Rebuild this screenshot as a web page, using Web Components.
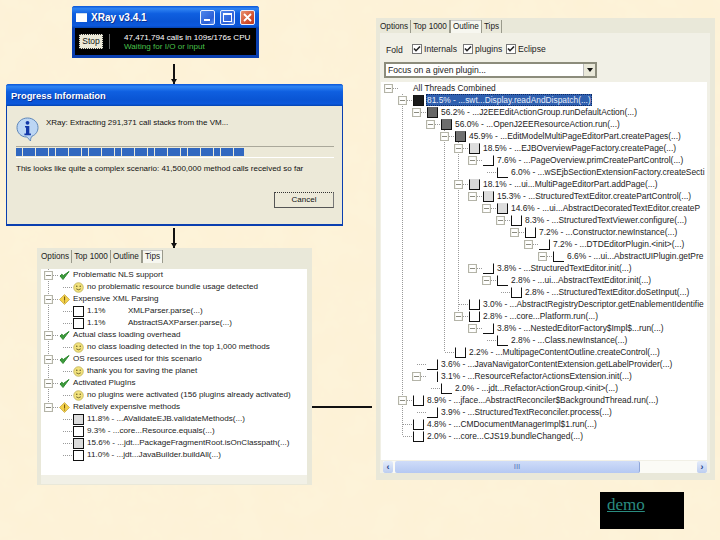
<!DOCTYPE html>
<html>
<head>
<meta charset="utf-8">
<title>XRay</title>
<style>
  html, body { margin: 0; padding: 0; background: #fdf2d6; }
</style>
</head>
<body>
<slide-canvas>
  <flow-arrow style="left:173px;top:64px;height:20px"></flow-arrow>
  <flow-arrow style="left:173px;top:228px;height:20px"></flow-arrow>
  <flow-arrow horizontal style="left:312px;top:406px;width:60px"></flow-arrow>

  <xray-window style="left:72px;top:6px"></xray-window>
  <progress-dialog style="left:6px;top:84px"></progress-dialog>

  <eclipse-panel tabs="Options,Top 1000,Outline,Tips" active="Tips" style="left:37px;top:248px;width:275px;height:237px;--row-font:8.1px">
    <tree-view style="height:206px;margin-top:6px">
      <tree-row level="1" g="0" kind="check" exp>Problematic NLS support</tree-row>
      <tree-row level="2" g="0" kind="smile">no problematic resource bundle usage detected</tree-row>
      <tree-row level="1" g="0" kind="warn" exp>Expensive XML Parsing</tree-row>
      <tree-row level="2" g="0" kind="box">1.1%&nbsp;&nbsp;&nbsp;&nbsp;&nbsp;&nbsp;&nbsp;&nbsp;&nbsp;&nbsp;XMLParser.parse(...)</tree-row>
      <tree-row level="2" g="0" kind="box">1.1%&nbsp;&nbsp;&nbsp;&nbsp;&nbsp;&nbsp;&nbsp;&nbsp;&nbsp;&nbsp;AbstractSAXParser.parse(...)</tree-row>
      <tree-row level="1" g="0" kind="check" exp>Actual class loading overhead</tree-row>
      <tree-row level="2" g="0" kind="smile">no class loading detected in the top 1,000 methods</tree-row>
      <tree-row level="1" g="0" kind="check" exp>OS resources used for this scenario</tree-row>
      <tree-row level="2" g="0" kind="smile">thank you for saving the planet</tree-row>
      <tree-row level="1" g="0" kind="check" exp>Activated PlugIns</tree-row>
      <tree-row level="2" g="0" kind="smile">no plugins were activated (156 plugins already activated)</tree-row>
      <tree-row level="1" g="0" tail kind="warn" exp>Relatively expensive methods</tree-row>
      <tree-row level="2" kind="box" fill="#dcdcdc">11.8% - ...AValidateEJB.validateMethods(...)</tree-row>
      <tree-row level="2" kind="box">9.3% - ...core...Resource.equals(...)</tree-row>
      <tree-row level="2" kind="box" fill="#dcdcdc">15.6% - ...jdt...PackageFragmentRoot.isOnClasspath(...)</tree-row>
      <tree-row level="2" kind="box">11.0% - ...jdt...JavaBuilder.buildAll(...)</tree-row>
    </tree-view>
  </eclipse-panel>

  <eclipse-panel tabs="Options,Top 1000,Outline,Tips" active="Outline" style="left:376px;top:18px;width:339px;height:462px;--row-font:8.4px">
    <fold-bar></fold-bar>
    <focus-combo>Focus on a given plugin...</focus-combo>
    <tree-view style="height:378px;margin-left:1px;margin-right:3px;padding-left:14px">
      <tree-row level="0" exp kind="none">All Threads Combined</tree-row>
      <tree-row level="1" g="0" exp fill="#1b1b1b" selected>81.5% - ...swt...Display.readAndDispatch(...)</tree-row>
      <tree-row level="2" g="0" exp fill="#666">56.2% - ...J2EEEditActionGroup.runDefaultAction(...)</tree-row>
      <tree-row level="3" g="0" exp fill="#6c6c6c">56.0% - ...OpenJ2EEResourceAction.run(...)</tree-row>
      <tree-row level="4" g="0 3" exp fill="#707070">45.9% - ...EditModelMultiPageEditorPart.createPages(...)</tree-row>
      <tree-row level="5" g="0 3 4" exp fill="#ddd">18.5% - ...EJBOverviewPageFactory.createPage(...)</tree-row>
      <tree-row level="6" g="0 3 4" exp edges="rb">7.6% - ...PageOverview.primCreatePartControl(...)</tree-row>
      <tree-row level="7" g="0 3 4" edges="lb">6.0% - ...wSEjbSectionExtensionFactory.createSecti</tree-row>
      <tree-row level="5" g="0 3 4" exp fill="#d8d8d8">18.1% - ...ui...MultiPageEditorPart.addPage(...)</tree-row>
      <tree-row level="6" g="0 3 4" exp fill="#ddd">15.3% - ...StructuredTextEditor.createPartControl(...)</tree-row>
      <tree-row level="7" g="0 3 4" exp fill="#ddd">14.6% - ...ui...AbstractDecoratedTextEditor.createP</tree-row>
      <tree-row level="8" g="0 3 4" exp>8.3% - ...StructuredTextViewer.configure(...)</tree-row>
      <tree-row level="9" g="0 3 4" exp>7.2% - ...Constructor.newInstance(...)</tree-row>
      <tree-row level="10" g="0 3 4" exp edges="rb">7.2% - ...DTDEditorPlugin.&lt;init&gt;(...)</tree-row>
      <tree-row level="11" g="0 3 4" exp edges="lb">6.6% - ...ui...AbstractUIPlugin.getPre</tree-row>
      <tree-row level="6" g="0 3 4" exp edges="rb">3.8% - ...StructuredTextEditor.init(...)</tree-row>
      <tree-row level="7" g="0 3 4" exp edges="lb">2.8% - ...ui...AbstractTextEditor.init(...)</tree-row>
      <tree-row level="8" g="0 3 4">2.8% - ...StructuredTextEditor.doSetInput(...)</tree-row>
      <tree-row level="5" g="0 3 4">3.0% - ...AbstractRegistryDescriptor.getEnablementIdentifie</tree-row>
      <tree-row level="5" g="0 3 4" tail exp>2.8% - ...core...Platform.run(...)</tree-row>
      <tree-row level="6" g="0 3" exp edges="rb">3.8% - ...NestedEditorFactory$Impl$...run(...)</tree-row>
      <tree-row level="7" g="0 3" edges="lb">2.8% - ...Class.newInstance(...)</tree-row>
      <tree-row level="4" g="0 3" tail>2.2% - ...MultipageContentOutline.createControl(...)</tree-row>
      <tree-row level="2" g="0" edges="rb">3.6% - ...JavaNavigatorContentExtension.getLabelProvider(...)</tree-row>
      <tree-row level="2" g="0" exp edges="r">3.1% - ...ResourceRefactorActionsExtension.init(...)</tree-row>
      <tree-row level="3" g="0" edges="lb">2.0% - ...jdt...RefactorActionGroup.&lt;init&gt;(...)</tree-row>
      <tree-row level="1" g="0" exp>8.9% - ...jface...AbstractReconciler$BackgroundThread.run(...)</tree-row>
      <tree-row level="2" g="0" edges="rb">3.9% - ...StructuredTextReconciler.process(...)</tree-row>
      <tree-row level="1" g="0">4.8% - ...CMDocumentManagerImpl$1.run(...)</tree-row>
      <tree-row level="1" g="0" tail>2.0% - ...core...CJS19.bundleChanged(...)</tree-row>
    </tree-view>
    <h-scrollbar></h-scrollbar>
  </eclipse-panel>

  <demo-link style="left:600px;top:492px">demo</demo-link>
</slide-canvas>

<script>
const UI_FONT = '"Liberation Sans", Arial, sans-serif';

class SlideCanvas extends HTMLElement {
    constructor() {
        super();
        this.attachShadow({ mode: 'open' });
    }

    connectedCallback() {
        this.shadowRoot.innerHTML = `
        <style>
            :host { display: block; position: relative; width: 720px; height: 540px; overflow: hidden; background: #fdf2d6; }
            svg { position: absolute; left: 0; top: 0; }
        </style>
        <svg width="720" height="540">
            <filter id="paper" x="0" y="0" width="100%" height="100%">
                <feTurbulence type="fractalNoise" baseFrequency="0.035" numOctaves="4" seed="7"/>
                <feColorMatrix values="0 0 0 0 0.98  0 0 0 0 0.90  0 0 0 0 0.72  0.9 0 0 0 -0.18"/>
            </filter>
            <rect width="720" height="540" filter="url(#paper)"/>
        </svg>
        <slot></slot>
        `;
    }
}

class FlowArrow extends HTMLElement {
    constructor() {
        super();
        this.attachShadow({ mode: 'open' });
    }

    connectedCallback() {
        this.shadowRoot.innerHTML = `
        <style>
            :host { display: block; position: absolute; width: 2px; background: #111; }
            :host([horizontal]) { height: 2px; }
            :host(:not([horizontal]))::after {
                content: '';
                position: absolute;
                left: -2px;
                bottom: 0;
                border-left: 3px solid transparent;
                border-right: 3px solid transparent;
                border-top: 5px solid #111;
            }
        </style>
        `;
    }
}

class XpTitlebar extends HTMLElement {
    constructor() {
        super();
        this.attachShadow({ mode: 'open' });
    }

    connectedCallback() {
        this.shadowRoot.innerHTML = `
        <style>
            :host {
                display: flex;
                align-items: center;
                box-sizing: border-box;
                height: 22px;
                padding: 0 4px;
                gap: 4px;
                color: #fff;
                font: bold 10px ${UI_FONT};
                border-radius: 3px 3px 0 0;
                background: linear-gradient(#0a56d8, #2f84f2 12%, #0f5fe0 35%, #0a55d4 70%, #0c58dc 90%, #0544b0);
                text-shadow: 1px 1px 0 #0a2f90;
            }
        </style>
        <slot></slot>
        `;
    }
}

class XrayWindow extends HTMLElement {
    constructor() {
        super();
        this.attachShadow({ mode: 'open' });
    }

    connectedCallback() {
        this.shadowRoot.innerHTML = `
        <style>
            :host { display: block; position: absolute; width: 187px; height: 52px; background: #0a3fb0; font-family: ${UI_FONT}; border-radius: 3px 3px 0 0; }
            .icon { width: 11px; height: 8px; background: #fff; border-top: 1px solid #cde; margin-right: 0; }
            .name { flex: 1; font-size: 10px; }
            .ctl {
                width: 15px;
                height: 15px;
                box-sizing: border-box;
                border: 1px solid #e8f0ff;
                border-radius: 2px;
                background: linear-gradient(135deg, #4f86ea, #2a5fd8 70%, #6c9af0);
                margin-left: 1px;
                display: flex;
                align-items: center;
                justify-content: center;
            }
            .ctl.min::before { content: ''; width: 6px; height: 2px; background: #fff; margin-top: 6px; margin-right: 2px; }
            .ctl.max::before { content: ''; width: 7px; height: 6px; border: 1px solid #fff; border-top-width: 2px; }
            .ctl.close { background: linear-gradient(135deg, #e89070, #d04a28 70%, #c03a20); }
            .ctl.close svg { display: block; }
            .body {
                margin: 0 3px;
                height: 27px;
                background: #000;
                display: flex;
                align-items: center;
                padding-left: 4px;
                box-sizing: border-box;
            }
            .stop {
                width: 24px;
                height: 15px;
                box-sizing: border-box;
                background: #ece9d8;
                border: 1px dotted #333;
                color: #111;
                font-size: 8.5px;
                line-height: 13px;
                text-align: center;
            }
            .sep { width: 1px; height: 15px; background: #666; margin: 0 14px 0 6px; }
            .lines { font-size: 8.1px; line-height: 9px; white-space: nowrap; }
            .cpu { color: #fff; }
            .wait { color: #49c24a; }
        </style>
        <xp-titlebar>
            <span class="icon"></span>
            <span class="name">XRay v3.4.1</span>
            <span class="ctl min"></span>
            <span class="ctl max"></span>
            <span class="ctl close"><svg width="9" height="9" viewBox="0 0 9 9"><path d="M1 1l7 7M8 1l-7 7" stroke="#fff" stroke-width="1.8"/></svg></span>
        </xp-titlebar>
        <div class="body">
            <div class="stop">Stop</div>
            <div class="sep"></div>
            <div class="lines">
                <div class="cpu">47,471,794 calls in 109s/176s CPU</div>
                <div class="wait">Waiting for I/O or input</div>
            </div>
        </div>
        `;
    }
}

class ProgressDialog extends HTMLElement {
    constructor() {
        super();
        this.attachShadow({ mode: 'open' });
    }

    connectedCallback() {
        this.shadowRoot.innerHTML = `
        <style>
            :host { display: block; position: absolute; width: 337px; height: 142px; background: #0a3fb0; font: 8px ${UI_FONT}; color: #111; border-radius: 3px 3px 0 0; }
            xp-titlebar { padding-left: 5px; font-size: 9.4px; }
            .body { margin: 0 1px; height: 118px; box-sizing: border-box; background: #ece9d8; padding: 11px 8px 0 9px; }
            .info { display: flex; gap: 7px; height: 29px; }
            .info svg { display: block; flex: none; }
            .info span { margin-top: 1px; }
            .bar {
                height: 9px;
                border-top: 1px solid #aaa89a;
                border-bottom: 1px solid #fff;
                padding: 1px 0 0;
                box-sizing: content-box;
            }
            .fill {
                width: 228px;
                height: 8px;
                background: repeating-linear-gradient(to right, #3168c0 0 6px, #ece9d8 6px 6.6px);
            }
            .msg { margin-top: 6px; white-space: nowrap; }
            .foot { display: flex; justify-content: flex-end; margin-top: 19px; }
            .cancel {
                width: 60px;
                height: 16px;
                box-sizing: border-box;
                border: 1px solid #555;
                border-top: 1px dotted #333;
                border-right-color: #777;
                background: #ece9d8;
                text-align: center;
                line-height: 14px;
            }
        </style>
        <xp-titlebar>Progress Information</xp-titlebar>
        <div class="body">
            <div class="info">
                <svg width="23" height="25" viewBox="0 0 23 25">
                    <path d="M11.5 1C5.5 1 1 5.3 1 10.5S5 20 10.5 20c1 0 2 2 4 4 0-2 .5-3.8 1.5-4.8 4-1.6 6-5 6-8.7C22 5.3 17.5 1 11.5 1z" fill="#bcd6f4" stroke="#5d86b8"/>
                    <circle cx="11.5" cy="5.8" r="1.9" fill="#1338a8"/>
                    <path d="M9 9h4.3v7.6h1.6v1.6H8.4v-1.6H10v-6H9z" fill="#1338a8"/>
                </svg>
                <span>XRay: Extracting 291,371 call stacks from the VM...</span>
            </div>
            <div class="bar"><div class="fill"></div></div>
            <div class="msg">This looks like quite a complex scenario: 41,500,000 method calls received so far</div>
            <div class="foot"><div class="cancel">Cancel</div></div>
        </div>
        `;
    }
}

class EclipsePanel extends HTMLElement {
    constructor() {
        super();
        this.attachShadow({ mode: 'open' });
    }

    connectedCallback() {
        const active = this.getAttribute('active');
        const tabs = this.getAttribute('tabs').split(',').map(name =>
            `<span class="tab ${name === active ? 'on' : ''}">${name}</span>`).join('');
        this.shadowRoot.innerHTML = `
        <style>
            :host { display: block; position: absolute; box-sizing: border-box; background: #e9e8d9; padding: 2px 5px 0 4px; font: 8.2px ${UI_FONT}; color: #222; }
            .tabs { display: flex; height: 13px; }
            .tab { padding: 0 2px; line-height: 13px; border-right: 1px solid #9a9a8c; white-space: nowrap; }
            .tab:first-child { padding-left: 0; }
            .tab.on { background: #f7f7f0; border-left: 1px solid #9a9a8c; box-shadow: inset 0 1px 0 #ccc; }
            .page { background: #f1f0e6; box-sizing: border-box; height: calc(100% - 20px); }
        </style>
        <div class="tabs">${tabs}</div>
        <div class="page"><slot></slot></div>
        `;
    }
}

class FoldBar extends HTMLElement {
    constructor() {
        super();
        this.attachShadow({ mode: 'open' });
    }

    connectedCallback() {
        const box = label => `
            <span class="opt"><svg width="10" height="10" viewBox="0 0 10 10"><rect x=".5" y=".5" width="9" height="9" fill="#fff" stroke="#777"/><path d="M2 4.5l2 2.2L8 2.5" fill="none" stroke="#222" stroke-width="1.6"/></svg>${label}</span>`;
        this.shadowRoot.innerHTML = `
        <style>
            :host { display: flex; align-items: center; height: 29px; padding: 2px 0 0 6px; font: 8.6px ${UI_FONT}; color: #222; box-sizing: border-box; }
            .fold { width: 26px; margin-top: 2px; }
            .opt { display: flex; align-items: center; gap: 2px; }
            .opt:nth-of-type(2) { width: 51px; }
            .opt:nth-of-type(3) { width: 43px; }
            svg { display: block; }
        </style>
        <span class="fold">Fold</span>
        ${box('Internals')}${box('plugins')}${box('Eclipse')}
        `;
    }
}

class FocusCombo extends HTMLElement {
    constructor() {
        super();
        this.attachShadow({ mode: 'open' });
    }

    connectedCallback() {
        this.shadowRoot.innerHTML = `
        <style>
            :host {
                display: flex;
                align-items: center;
                box-sizing: border-box;
                width: 213px;
                height: 16px;
                margin: 0 0 4px 4px;
                padding-left: 2px;
                background: #fff;
                border: 2px solid #8c8c7c;
                font: 8.6px ${UI_FONT};
                color: #222;
            }
            .text { flex: 1; }
            .btn { width: 11px; height: 12px; background: #e9e8d9; border-left: 1px solid #bbb; display: flex; align-items: center; justify-content: center; }
            .btn::before { content: ''; border-left: 3px solid transparent; border-right: 3px solid transparent; border-top: 4px solid #111; }
        </style>
        <span class="text"><slot></slot></span>
        <span class="btn"></span>
        `;
    }
}

class TreeView extends HTMLElement {
    constructor() {
        super();
        this.attachShadow({ mode: 'open' });
    }

    connectedCallback() {
        this.shadowRoot.innerHTML = `
        <style>
            :host { display: block; background: #fff; overflow: hidden; box-sizing: border-box; }
        </style>
        <slot></slot>
        `;
    }
}

const TREE_ICONS = {
    check: `<svg width="11" height="11" viewBox="0 0 11 11"><path d="M1 6l3 3.5L10 1.5 4.3 5.6 2.8 4.2z" fill="#3d9a3c" stroke="#2f8a30" stroke-width="1"/></svg>`,
    warn: `<svg width="11" height="11" viewBox="0 0 11 11"><path d="M5.5.5l5 5-5 5-5-5z" fill="#f4d24a" stroke="#b8962a" stroke-width=".6"/><path d="M5 2.5h1.1v4H5zM5 7.4h1.1v1.2H5z" fill="#7a5a10"/></svg>`,
    smile: `<svg width="11" height="11" viewBox="0 0 11 11"><circle cx="5.5" cy="5.5" r="4.8" fill="#f2e27c" stroke="#b8aa50" stroke-width=".7"/><circle cx="3.8" cy="4.2" r=".7" fill="#5a5020"/><circle cx="7.2" cy="4.2" r=".7" fill="#5a5020"/><path d="M3.2 6.8q2.3 2 4.6 0" fill="none" stroke="#5a5020" stroke-width=".8"/></svg>`
};

class TreeRow extends HTMLElement {
    constructor() {
        super();
        this.attachShadow({ mode: 'open' });
    }

    connectedCallback() {
        const level = Number(this.getAttribute('level'));
        const guides = (this.getAttribute('g') || '').split(' ').filter(Boolean).map(Number);
        const cells = [];
        for (let i = 0; i < level - 1; i++) {
            cells.push(`<span class="cell ${guides.includes(i) ? 'guide' : ''}"></span>`);
        }
        const ownGuide = guides.includes(level - 1);
        const kind = this.getAttribute('kind') || 'square';
        let icon = '';
        if (kind === 'none') {
            icon = '<span class="icon"></span>';
        } else if (TREE_ICONS[kind]) {
            icon = `<span class="icon">${TREE_ICONS[kind]}</span>`;
        } else {
            const edges = kind === 'box' ? 'tlrb' : (this.getAttribute('edges') || 'lrb');
            const side = (c, name) => edges.includes(c) ? `border-${name}:1px solid #111;` : '';
            const fill = this.getAttribute('fill') || '#fff';
            const top = edges.includes('t') ? 'border-top:1px solid #111;' : `border-top:1px solid ${fill};`;
            icon = `<span class="square" style="background:${fill};${top}${side('l', 'left')}${side('r', 'right')}${side('b', 'bottom')}"></span>`;
        }
        this.shadowRoot.innerHTML = `
        <style>
            :host { display: flex; align-items: center; height: 12px; font: var(--row-font, 8.5px)/12px ${UI_FONT}; color: #222; white-space: nowrap; }
            :host([level="0"]) { margin-left: -14px; }
            .cell { flex: none; width: 14px; height: 12px; }
            .guide, .own.guide {
                background: repeating-linear-gradient(to bottom, #9a9a9a 0 1px, transparent 1px 2px) 7px 0 / 1px 100% no-repeat;
            }
            :host([tail]) .own.guide { background-size: 1px 50%; }
            .own {
                flex: none;
                width: 18px;
                height: 12px;
                position: relative;
            }
            .own::after {
                content: '';
                position: absolute;
                left: 8px;
                right: 1px;
                top: 6px;
                border-top: 1px dotted #9a9a9a;
            }
            .exp {
                position: absolute;
                z-index: 1;
                left: 3px;
                top: 2px;
                width: 9px;
                height: 9px;
                box-sizing: border-box;
                border: 1px solid #b4b4a8;
                background: linear-gradient(to bottom, #fff 3px, #8c8c80 3px, #8c8c80 4px, #fff 4px) 1px 0 / 5px 100% no-repeat #f4f4ee;
            }
            .icon { flex: none; width: 11px; height: 11px; margin-right: 3px; }
            .icon svg { display: block; }
            .square { flex: none; width: 11px; height: 11px; box-sizing: border-box; margin-right: 3px; }
            .label { padding: 0 1px 0 0; }
            :host([selected]) .label { background: #2f5fae; color: #e8eefc; outline: 1px dotted #0d2a66; outline-offset: -1px; height: 12px; margin-left: -1px; padding-left: 1px; }
        </style>
        ${cells.join('')}
        <span class="own ${ownGuide ? 'guide' : ''}">${this.hasAttribute('exp') ? '<span class="exp"></span>' : ''}</span>
        ${icon}
        <span class="label"><slot></slot></span>
        `;
    }
}

class HScrollbar extends HTMLElement {
    constructor() {
        super();
        this.attachShadow({ mode: 'open' });
    }

    connectedCallback() {
        this.shadowRoot.innerHTML = `
        <style>
            :host { display: flex; align-items: center; gap: 2px; height: 12px; margin: 1px 3px 0 3px; background: #fbfbf6; box-sizing: border-box; font: bold 9px ${UI_FONT}; color: #24408a; }
            .btn { flex: none; width: 10px; height: 12px; background: linear-gradient(to bottom, #e4ecfa, #bccdf0); text-align: center; line-height: 12px; border-radius: 2px; }
            .thumb { flex: none; width: 244px; height: 12px; background: linear-gradient(to bottom, #cfdcf8, #b4c8f2); border-right: 1px solid #8fa6d8; border-radius: 2px; text-align: center; line-height: 11px; color: #5a76b8; font-weight: normal; font-size: 8px; }
            .rest { flex: 1; }
        </style>
        <span class="btn">&lsaquo;</span>
        <span class="thumb">III</span>
        <span class="rest"></span>
        <span class="btn">&rsaquo;</span>
        `;
    }
}

class DemoLink extends HTMLElement {
    constructor() {
        super();
        this.attachShadow({ mode: 'open' });
    }

    connectedCallback() {
        this.shadowRoot.innerHTML = `
        <style>
            :host { display: block; position: absolute; box-sizing: border-box; width: 84px; height: 37px; padding: 3px 0 0 7px; background: #000; }
            a { color: #2a8c80; font: 17px "Liberation Serif", "Times New Roman", serif; text-decoration: underline; }
        </style>
        <a href="#"><slot></slot></a>
        `;
    }
}

customElements.define('slide-canvas', SlideCanvas);
customElements.define('flow-arrow', FlowArrow);
customElements.define('xp-titlebar', XpTitlebar);
customElements.define('xray-window', XrayWindow);
customElements.define('progress-dialog', ProgressDialog);
customElements.define('eclipse-panel', EclipsePanel);
customElements.define('fold-bar', FoldBar);
customElements.define('focus-combo', FocusCombo);
customElements.define('tree-view', TreeView);
customElements.define('tree-row', TreeRow);
customElements.define('h-scrollbar', HScrollbar);
customElements.define('demo-link', DemoLink);
</script>
</body>
</html>
